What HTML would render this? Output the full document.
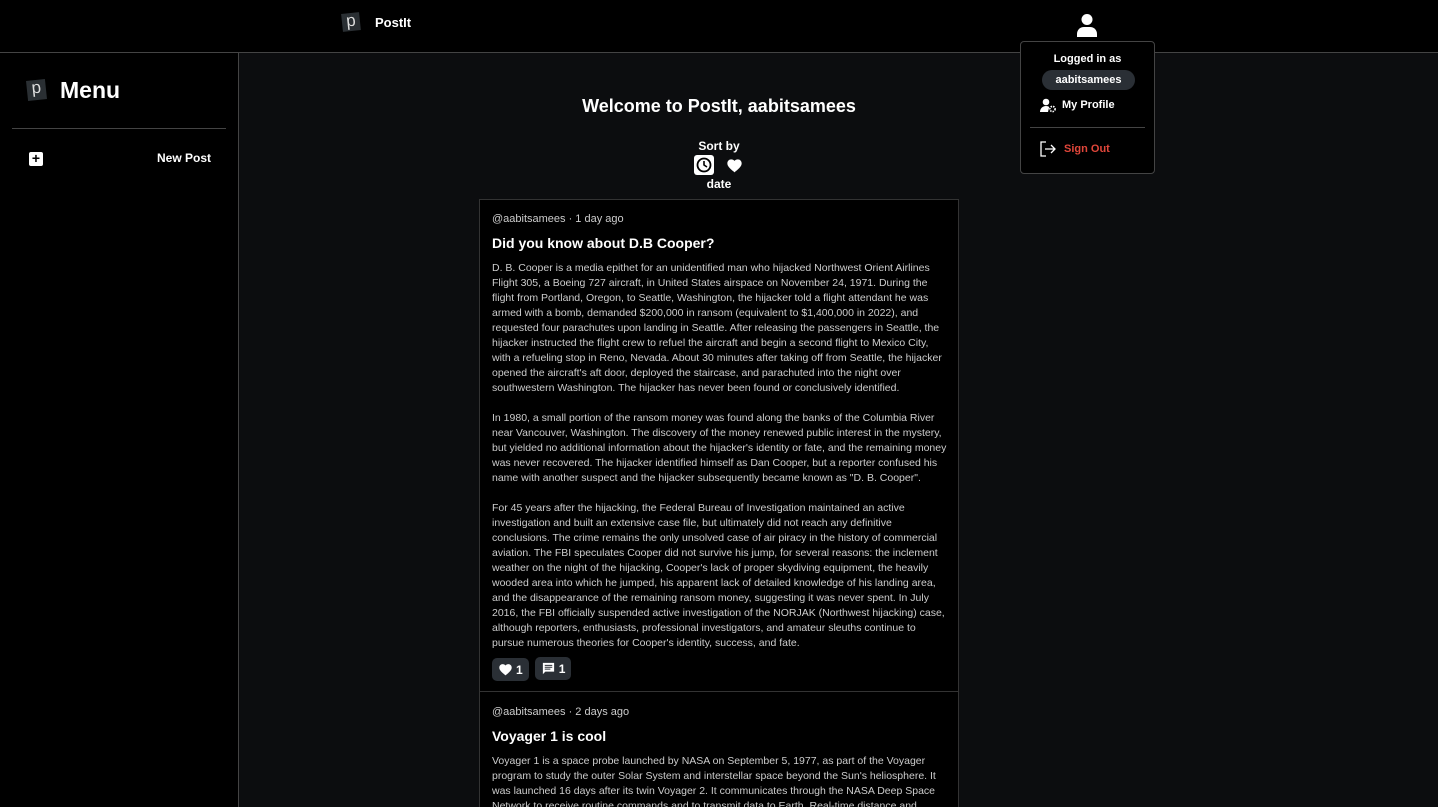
<!DOCTYPE html>
<html><head><meta charset="utf-8"><style>
*{box-sizing:border-box;margin:0;padding:0}
html,body{width:1438px;height:807px;overflow:hidden}
body{background:#0c0d0f;font-family:"Liberation Sans",Arial,sans-serif;color:#fff;position:relative}
.top{position:absolute;left:0;top:0;width:1438px;height:53px;background:#000;border-bottom:1px solid #444}
.logo{position:absolute;width:18px;height:18px;background:#2a2f33;color:#ddd;font-size:17px;line-height:16px;text-align:center;transform:rotate(-6deg)}
.side{position:absolute;left:0;top:53px;width:239px;height:754px;background:#000;border-right:1px solid #444}
.card{position:absolute;left:479px;width:480px;background:#000;border:1px solid #333;padding:0 12px;overflow:hidden}
.meta{font-size:11px;color:#ccc}
.title{font-size:14px;font-weight:bold;color:#fff}
.body div{font-size:10.5px;line-height:15px;color:#ccc;white-space:nowrap}
.btn{display:inline-flex;align-items:center;gap:3px;background:#2a2f35;border-radius:5px;height:23px;padding:0 6px;font-size:12px;font-weight:bold;margin-right:6px}
</style></head><body>
<div class="top">
<div class="logo" style="left:342px;top:13px">p</div>
<div style="position:absolute;left:375px;top:15px;font-size:13px;font-weight:bold">PostIt</div>
<svg style="position:absolute;left:1076px;top:13px" width="22" height="24" viewBox="0 0 22 24"><circle cx="11" cy="6.5" r="5.5" fill="#fff"/><path d="M1 24v-3c0-4 3-7 7-7h6c4 0 7 3 7 7v3z" fill="#fff"/></svg>
</div>
<div class="side">
<div class="logo" style="left:27px;top:27px;width:19px;height:20px">p</div>
<div style="position:absolute;left:60px;top:24px;font-size:23px;font-weight:bold">Menu</div>
<div style="position:absolute;left:12px;top:75px;width:214px;height:1px;background:#444"></div>
<div style="position:absolute;left:29px;top:99px;width:14px;height:14px;background:#fff;border-radius:2px;color:#000;font-size:14px;line-height:13px;text-align:center;font-weight:bold">+</div>
<div style="position:absolute;left:157px;top:98px;font-size:12px;font-weight:bold">New Post</div>
</div>
<div style="position:absolute;left:239px;width:960px;top:96px;text-align:center;font-size:18px;font-weight:bold">Welcome to PostIt, aabitsamees</div>
<div style="position:absolute;left:679px;width:80px;top:139px;text-align:center;font-size:12px;font-weight:bold">Sort by</div>
<div style="position:absolute;left:694px;top:155px;width:20px;height:20px;background:#fff;border-radius:3px"><svg width="20" height="20"><circle cx="10" cy="10" r="6.5" fill="none" stroke="#000" stroke-width="1.8"/><path d="M10 6v4l3 2" stroke="#000" stroke-width="1.6" fill="none"/></svg></div>
<svg style="position:absolute;left:726px;top:158px" width="17" height="15" viewBox="0 0 24 22"><path d="M12 21l-1.5-1.3C5 15 1.5 11.8 1.5 7.8 1.5 4.6 4 2 7.2 2c1.8 0 3.6.9 4.8 2.3C13.2 2.9 15 2 16.8 2 20 2 22.5 4.6 22.5 7.8c0 4-3.5 7.2-9 11.9z" fill="#fff"/></svg>
<div style="position:absolute;left:679px;width:80px;top:177px;text-align:center;font-size:12px;font-weight:bold">date</div>
<div class="card" style="top:199px;height:493px">
<div class="meta" style="margin-top:13px">@aabitsamees · 1 day ago</div>
<div class="title" style="margin-top:10px">Did you know about D.B Cooper?</div>
<div class="body" style="margin-top:10px">
<div>D. B. Cooper is a media epithet for an unidentified man who hijacked Northwest Orient Airlines</div>
<div>Flight 305, a Boeing 727 aircraft, in United States airspace on November 24, 1971. During the</div>
<div>flight from Portland, Oregon, to Seattle, Washington, the hijacker told a flight attendant he was</div>
<div>armed with a bomb, demanded $200,000 in ransom (equivalent to $1,400,000 in 2022), and</div>
<div>requested four parachutes upon landing in Seattle. After releasing the passengers in Seattle, the</div>
<div>hijacker instructed the flight crew to refuel the aircraft and begin a second flight to Mexico City,</div>
<div>with a refueling stop in Reno, Nevada. About 30 minutes after taking off from Seattle, the hijacker</div>
<div>opened the aircraft's aft door, deployed the staircase, and parachuted into the night over</div>
<div>southwestern Washington. The hijacker has never been found or conclusively identified.</div>
<div>&nbsp;</div>
<div>In 1980, a small portion of the ransom money was found along the banks of the Columbia River</div>
<div>near Vancouver, Washington. The discovery of the money renewed public interest in the mystery,</div>
<div>but yielded no additional information about the hijacker's identity or fate, and the remaining money</div>
<div>was never recovered. The hijacker identified himself as Dan Cooper, but a reporter confused his</div>
<div>name with another suspect and the hijacker subsequently became known as "D. B. Cooper".</div>
<div>&nbsp;</div>
<div>For 45 years after the hijacking, the Federal Bureau of Investigation maintained an active</div>
<div>investigation and built an extensive case file, but ultimately did not reach any definitive</div>
<div>conclusions. The crime remains the only unsolved case of air piracy in the history of commercial</div>
<div>aviation. The FBI speculates Cooper did not survive his jump, for several reasons: the inclement</div>
<div>weather on the night of the hijacking, Cooper's lack of proper skydiving equipment, the heavily</div>
<div>wooded area into which he jumped, his apparent lack of detailed knowledge of his landing area,</div>
<div>and the disappearance of the remaining ransom money, suggesting it was never spent. In July</div>
<div>2016, the FBI officially suspended active investigation of the NORJAK (Northwest hijacking) case,</div>
<div>although reporters, enthusiasts, professional investigators, and amateur sleuths continue to</div>
<div>pursue numerous theories for Cooper's identity, success, and fate.</div>
</div>
<div style="margin-top:6px"><span class="btn"><svg width="15" height="13" viewBox="0 0 24 22"><path d="M12 21l-1.5-1.3C5 15 1.5 11.8 1.5 7.8 1.5 4.6 4 2 7.2 2c1.8 0 3.6.9 4.8 2.3C13.2 2.9 15 2 16.8 2 20 2 22.5 4.6 22.5 7.8c0 4-3.5 7.2-9 11.9z" fill="#fff"/></svg>1</span><span class="btn"><svg width="15" height="15" viewBox="0 0 24 24"><path d="M3 3h18v14H7l-4 4z" fill="#fff"/><path d="M6 7h12M6 10h12M6 13h9" stroke="#2a2f35" stroke-width="1.6"/></svg>1</span></div>
</div>
<div class="card" style="top:691px;height:116px;border-bottom:none">
<div class="meta" style="margin-top:14px">@aabitsamees · 2 days ago</div>
<div class="title" style="margin-top:10px">Voyager 1 is cool</div>
<div class="body" style="margin-top:10px">
<div>Voyager 1 is a space probe launched by NASA on September 5, 1977, as part of the Voyager</div>
<div>program to study the outer Solar System and interstellar space beyond the Sun's heliosphere. It</div>
<div>was launched 16 days after its twin Voyager 2. It communicates through the NASA Deep Space</div>
<div>Network to receive routine commands and to transmit data to Earth. Real-time distance and</div>
</div>
</div>
<div style="position:absolute;left:1020px;top:41px;width:135px;height:133px;background:#000;border:1px solid #444;border-radius:4px">
<div style="position:absolute;left:0;width:133px;top:11px;text-align:center;font-size:11px;font-weight:bold">Logged in as</div>
<div style="position:absolute;left:21px;top:28px;width:93px;height:20px;background:#2a2f35;border-radius:10px;text-align:center;font-size:11px;font-weight:bold;line-height:20px">aabitsamees</div>
<svg style="position:absolute;left:19px;top:56px" width="17" height="15" viewBox="0 0 17 15"><circle cx="6" cy="4" r="3.3" fill="#fff"/><path d="M0 14c0-3.5 2.5-6 6-6 1.5 0 2.5.4 3.2 1L8 14z" fill="#fff"/><circle cx="12.5" cy="11" r="2.6" fill="none" stroke="#fff" stroke-width="1.6" stroke-dasharray="1.5 1"/></svg>
<div style="position:absolute;left:41px;top:57px;font-size:11px;font-weight:bold">My Profile</div>
<div style="position:absolute;left:9px;top:85px;width:115px;height:1px;background:#444"></div>
<svg style="position:absolute;left:19px;top:99px" width="16" height="16" viewBox="0 0 16 16"><path d="M6 1H1v14h5" fill="none" stroke="#fff" stroke-width="1.3"/><path d="M5 8h10M11 4l4 4-4 4" fill="none" stroke="#fff" stroke-width="1.3"/></svg>
<div style="position:absolute;left:43px;top:101px;font-size:11px;font-weight:bold;color:#e0463a">Sign Out</div>
</div>
</body></html>
